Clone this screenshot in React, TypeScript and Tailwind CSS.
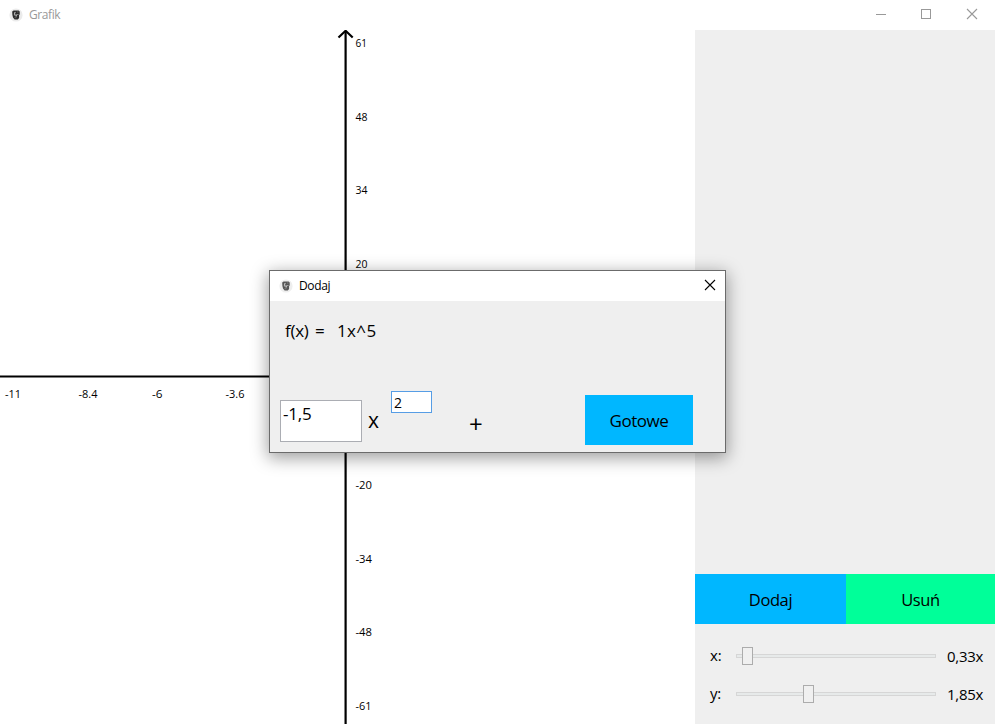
import React from "react";

const yLabels = [
  { text: "61", x: 355.5, y: 17, w: 11.5 },
  { text: "48", x: 355.5, y: 91, w: 12 },
  { text: "34", x: 355.5, y: 164, w: 12 },
  { text: "20", x: 355.5, y: 238, w: 12 },
  { text: "-20", x: 355.5, y: 459, w: 16.5 },
  { text: "-34", x: 355.5, y: 533, w: 16.5 },
  { text: "-48", x: 355.5, y: 606, w: 16.5 },
  { text: "-61", x: 355.5, y: 680, w: 16 },
];

const xLabels = [
  { text: "-11", x: 5, y: 368, w: 16 },
  { text: "-8.4", x: 78.5, y: 368, w: 19 },
  { text: "-6", x: 152, y: 368, w: 10.5 },
  { text: "-3.6", x: 225.5, y: 368, w: 19 },
];

function AppIcon({ faded = false }: { faded?: boolean }) {
  return (
    <svg width="14" height="14" viewBox="0 0 14 14" className="shrink-0" opacity={faded ? 1 : 0.8}>
      <circle cx="7" cy="7" r="6.6" fill="#ebebeb" />
      <path d="M3.200 3.400 4.600 2.400h5l1.100 1v3.200l-.6.3v3l-1.400 1.700H5.600L4 9.600 3.400 7z" fill="#2c2c2c" />
      <path d="M5 4.500 6.800 3.700 6.500 5 5.500 6.300 6.800 6.600 7 7.700 4.900 7.300z" fill="#b5b5b5" />
      <path d="M7.300 6.300h2.200v.8H8.200l-.4 1.500-1.300.2.300-1z" fill="#aaa" />
      <path d="M8 4h1.500M5.500 9.700h2" stroke="#777" strokeWidth=".7" />
    </svg>
  );
}

function CloseIcon() {
  return (
    <svg width="12" height="12" viewBox="0 0 12 12" className="shrink-0" fill="none" stroke="currentColor" strokeWidth="1.1">
      <path d="M1 1 11 11M11 1 1 11" />
    </svg>
  );
}

function Graph() {
  return (
    <svg width="695" height="694" viewBox="0 0 695 694" className="block shrink-0 bg-white">
      <g stroke="#000" strokeWidth="2.2" fill="none">
        <path d="M345.600 1V694" />
        <path d="M0 346.500H695" />
        <path d="M338.500 7.500 345.600.8 352.700 7.500" />
      </g>
      <g fontSize="11" fill="#000" fontFamily="'Open Sans', 'Noto Sans', sans-serif">
        {[...yLabels, ...xLabels].map((l) => (
          <text key={l.text} x={l.x} y={l.y} textLength={l.w} lengthAdjust="spacingAndGlyphs">
            {l.text}
          </text>
        ))}
      </g>
    </svg>
  );
}

function SliderRow({ label, value, before }: { label: string; value: string; before: number }) {
  return (
    <div className="flex h-[38px] items-center pl-[15px] text-[15px]">
      <span className="w-[26px] pb-[3px] leading-5 tracking-[-0.2px]">{label}</span>
      <div className="flex w-[200px] items-center">
        <div className="h-1 border border-r-0 border-[#d6d6d6] bg-[#e7eaea]" style={{ width: before }} />
        <div className="h-[18px] w-[11px] border border-[#acacac] bg-[#f0f0f0]" />
        <div className="h-1 flex-1 border border-l-0 border-[#d6d6d6] bg-[#e7eaea]" />
      </div>
      <span className="ml-[11px] whitespace-nowrap leading-5 tracking-[-0.25px]">{value}</span>
    </div>
  );
}

function Dialog() {
  return (
    <div className="absolute left-[269px] top-[270px] flex h-[183px] w-[457px] flex-col border border-[#6b6b6b] bg-[#efefef] shadow-[0_4px_16px_1px_rgba(0,0,0,0.38)]">
      <div className="flex h-[30px] shrink-0 items-center bg-white pl-[9px] pr-[9px]">
        <AppIcon />
        <span className="ml-[6px] text-[12px] leading-4 tracking-[-0.35px]">Dodaj</span>
        <span className="ml-auto flex pb-[2px]">
          <CloseIcon />
        </span>
      </div>
      <div className="ml-[15px] mt-[18px] flex h-6 text-[17px] leading-6">
        <span className="w-[30px] tracking-[-0.3px]">f(x)</span>
        <span className="w-[22px]">=</span>
        <span className="tracking-[0.35px]">1x^5</span>
      </div>
      <div className="mt-[48px] flex items-start pl-[10px]">
        <div className="mt-[9px] h-[42px] w-[82px] border border-[#abadb3] bg-white pl-[2px] text-[17px] leading-[25px] tracking-[-0.2px]">-1,5</div>
        <span className="ml-[6px] mt-[13px] w-[23px] text-[21px] leading-8">x</span>
        <div className="h-[22px] w-[41px] border border-[#569de5] bg-white pl-[2px] text-[14px] leading-[21px]">2</div>
        <span className="ml-[37px] mt-[17px] w-[116px] text-[24px] leading-8">+</span>
        <button className="mt-1 h-[50px] w-[108px] bg-[#00b7ff] pt-[2px] text-[17px] tracking-[-0.45px]">Gotowe</button>
      </div>
    </div>
  );
}

export default function App() {
  return (
    <div className="relative flex h-[724px] w-[995px] flex-col overflow-hidden bg-white font-['Open_Sans','Noto_Sans',sans-serif] text-black">
      <header className="flex h-[30px] shrink-0 items-center pl-[9px] pr-[17px] text-[#999]">
        <AppIcon faded />
        <span className="ml-[6px] text-[12px] leading-4 tracking-[-0.4px]">Grafik</span>
        <div className="ml-auto flex items-center">
          <svg width="10" height="10" viewBox="0 0 10 10" stroke="currentColor">
            <path d="M0 4.500H10" />
          </svg>
          <svg width="10" height="10" viewBox="0 0 10 10" fill="none" stroke="currentColor" className="mb-[2px] ml-[35px] mr-[35px]">
            <rect x=".5" y=".5" width="9" height="9" />
          </svg>
          <span className="mb-[2px]">
            <CloseIcon />
          </span>
        </div>
      </header>
      <main className="flex flex-1">
        <Graph />
        <aside className="flex w-[300px] flex-col bg-[#efefef]">
          <div className="flex-1" />
          <div className="flex h-[50px] text-[16.5px] tracking-[-0.4px]">
            <button className="w-[151px] bg-[#00b7ff] pt-[2px]">Dodaj</button>
            <button className="flex-1 bg-[#00ff99] pt-[2px]">Usuń</button>
          </div>
          <div className="h-[100px] pt-[13px]">
            <SliderRow label="x:" value="0,33x" before={6} />
            <SliderRow label="y:" value="1,85x" before={67} />
          </div>
        </aside>
      </main>
      <Dialog />
    </div>
  );
}
